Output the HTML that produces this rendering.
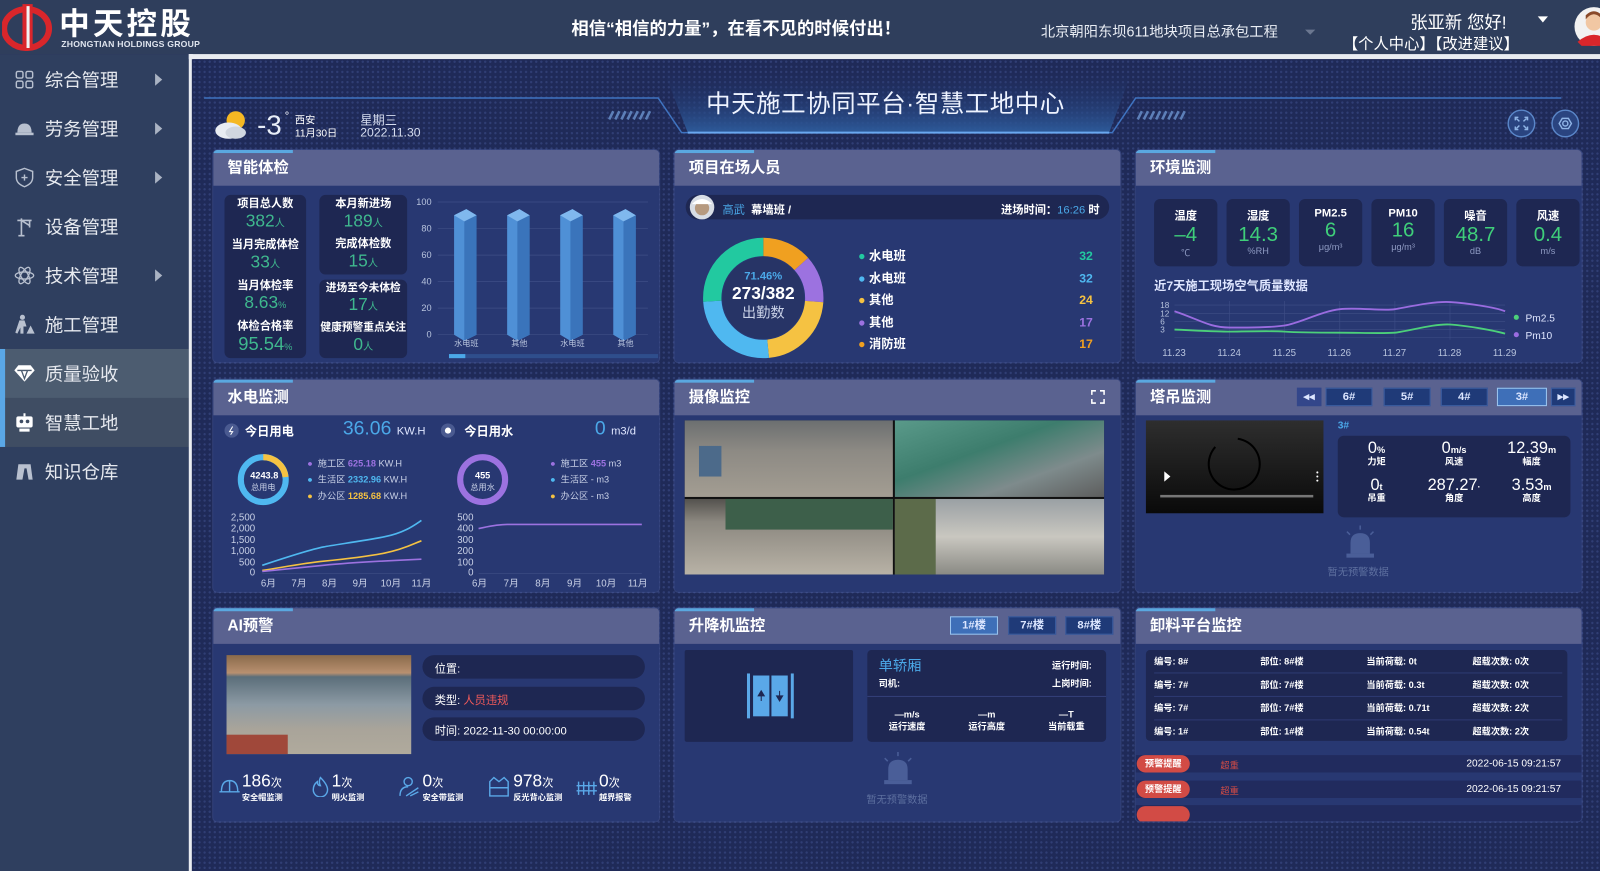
<!DOCTYPE html>
<html><head><meta charset="utf-8">
<style>
*{margin:0;padding:0;box-sizing:border-box}
body{width:1600px;height:854px;overflow:hidden;background:#1f2a58;font-family:"Liberation Sans","Noto Sans CJK SC",sans-serif;color:#fff;position:relative}
#w{position:absolute;left:0;top:0;width:1568px;height:837px;transform:scale(1.020408);transform-origin:0 0}
.a{position:absolute}
.hdr{left:0;top:0;width:1600px;height:53px;background:#2f3e5c}
.side{left:0;top:53px;width:185px;height:801px;background:#2f3f5f}
.mi{position:absolute;left:0;width:185px;height:48px;font-size:18px;color:#e6e9ef;display:flex;align-items:center}
.mi .ic{width:20px;height:20px;margin-left:14px;margin-right:10px;display:flex;align-items:center;justify-content:center}
.mi .ar{position:absolute;left:152px;top:18px;width:0;height:0;border-left:7px solid #aab3c3;border-top:6px solid transparent;border-bottom:6px solid transparent}
.main{left:188px;top:58px;width:1412px;height:796px;background:#1f2a58;background-image:radial-gradient(rgba(80,100,170,.35) 1px,transparent 1.2px);background-size:5px 5px}
.strip{left:185px;top:53px;width:1415px;height:5px;background:#e9ecf1}
.strip2{left:185px;top:53px;width:4px;height:801px;background:#e9ecf1}
.pn{position:absolute;background:#283872;border-radius:4px;overflow:hidden;box-shadow:0 0 0 1px rgba(90,110,180,.35)}
.pt{height:35px;background:#5a6290;font-size:15px;font-weight:bold;padding-left:14px;line-height:35px;position:relative}
.pt:before{content:"";position:absolute;left:0;top:0;width:78px;height:3px;background:#5aa8e0}
.card{position:absolute;background:#1e2752;border-radius:6px}
.c{text-align:center}
.g{color:#3fb88e}
.nw{white-space:nowrap}
.btn{position:absolute;top:8px;height:18px;background:#1f3a78;border:1px solid #3c5da0;font-size:11px;font-weight:bold;text-align:center;line-height:16px;color:#dce6ff}
</style></head><body><div id="w">
<div class="a hdr"></div>
<svg class="a" style="left:2px;top:2px" width="52" height="48" viewBox="0 0 52 48"><ellipse cx="24" cy="26" rx="22" ry="19" fill="none" stroke="#d9262b" stroke-width="6"/><path d="M20 2 L30 2 L30 46 L20 46Z" fill="#d9262b"/><path d="M24 4 L27 4 L27 45 L24 45Z" fill="#f3f3f3"/></svg>
<div class="a" style="left:58px;top:4px;font-size:30px;font-weight:bold;letter-spacing:3px;color:#fff;font-family:'Noto Sans CJK SC',sans-serif;line-height:34px">中天控股</div>
<div class="a" style="left:60px;top:38px;font-size:8.5px;font-weight:bold;color:#dfe4ee;letter-spacing:.2px">ZHONGTIAN HOLDINGS GROUP</div>
<div class="a" style="left:560px;top:14px;font-size:17px;font-weight:bold">相信“相信的力量”，在看不见的时候付出！</div>
<div class="a" style="left:1020px;top:21px;font-size:14px;color:#e9edf4">北京朝阳东坝611地块项目总承包工程</div>
<div class="a" style="left:1279px;top:29px;border-top:5px solid #6b7790;border-left:5px solid transparent;border-right:5px solid transparent"></div>
<div class="a" style="left:1382px;top:8px;font-size:17px">张亚新 您好!</div>
<div class="a" style="left:1507px;top:16px;border-top:6px solid #fff;border-left:5px solid transparent;border-right:5px solid transparent"></div>
<div class="a" style="left:1316px;top:32px;font-size:15px">【个人中心】【改进建议】</div>
<svg class="a" style="left:1540px;top:5px" width="40" height="42"><circle cx="22" cy="21" r="19" fill="#f2f2f2"/><circle cx="22" cy="17" r="8" fill="#f1c7a3"/><path d="M14 14 Q22 4 30 14 L30 10 Q22 2 14 10Z" fill="#8a4a2a"/><path d="M6 36 Q22 22 38 36 L34 40 L10 40Z" fill="#d9262b"/></svg>

<div class="a side"></div>
<div class="a" style="left:0;top:342px;width:185px;height:48px;background:#4c5c70"></div>
<div class="a" style="left:0;top:390px;width:185px;height:48px;background:#3f4d63"></div>
<div class="a" style="left:0;top:342px;width:5px;height:96px;background:#5aa7e6"></div>
<div class="mi" style="top:54px"><span class="ic"><svg width="18" height="18" fill="none" stroke="#b8c0cf" stroke-width="1.4"><rect x="1" y="1" width="6.5" height="6.5" rx="1.5"/><rect x="10.5" y="1" width="6.5" height="6.5" rx="1.5"/><rect x="1" y="10.5" width="6.5" height="6.5" rx="1.5"/><rect x="10.5" y="10.5" width="6.5" height="6.5" rx="1.5"/></svg></span>综合管理<i class="ar"></i></div>
<div class="mi" style="top:102px"><span class="ic"><svg width="18" height="14"><path d="M2 11 Q2 2 9 2 Q16 2 16 11Z" fill="#b8c0cf"/><rect x="0" y="11" width="18" height="2.5" fill="#b8c0cf"/></svg></span>劳务管理<i class="ar"></i></div>
<div class="mi" style="top:150px"><span class="ic"><svg width="18" height="20" fill="none" stroke="#b8c0cf" stroke-width="1.4"><path d="M9 1 L17 4 L17 10 Q17 16 9 19 Q1 16 1 10 L1 4Z"/><path d="M9 7 V13 M6 10 H12"/></svg></span>安全管理<i class="ar"></i></div>
<div class="mi" style="top:198px"><span class="ic"><svg width="18" height="20" fill="none" stroke="#b8c0cf" stroke-width="1.6"><path d="M2 4 H16 M6 2 V19 M3 19 H9 M6 4 L14 9 M14 4 V11"/></svg></span>设备管理</div>
<div class="mi" style="top:246px"><span class="ic"><svg width="20" height="20" fill="none" stroke="#b8c0cf" stroke-width="1.3"><ellipse cx="10" cy="10" rx="9" ry="3.5"/><ellipse cx="10" cy="10" rx="9" ry="3.5" transform="rotate(60 10 10)"/><ellipse cx="10" cy="10" rx="9" ry="3.5" transform="rotate(-60 10 10)"/></svg></span>技术管理<i class="ar"></i></div>
<div class="mi" style="top:294px"><span class="ic"><svg width="20" height="20" fill="#b8c0cf"><circle cx="8" cy="3" r="2.5"/><path d="M5 6 L10 6 L12 12 L9 12 L9 19 L6 19 L6 13 L3 19 L1 18 Z"/><path d="M12 19 L16 11 L20 19Z"/></svg></span>施工管理</div>
<div class="mi" style="top:342px"><span class="ic"><svg width="20" height="18"><path d="M4 1 H16 L20 6 L10 17 L0 6Z" fill="#fff"/><path d="M3 6 H17 M7 6 L10 14 L13 6" stroke="#4c5c70" stroke-width="1.3" fill="none"/></svg></span>质量验收</div>
<div class="mi" style="top:390px"><span class="ic"><svg width="20" height="20"><rect x="2" y="4" width="16" height="11" rx="2" fill="#fff"/><circle cx="7" cy="9" r="1.8" fill="#3f4d63"/><circle cx="13" cy="9" r="1.8" fill="#3f4d63"/><rect x="5" y="16" width="10" height="3" fill="#fff"/><rect x="9" y="1" width="2" height="3" fill="#fff"/></svg></span>智慧工地</div>
<div class="mi" style="top:438px"><span class="ic"><svg width="18" height="18" fill="#b8c0cf"><path d="M3 2 H15 L17 17 H13 L11 6 H9 L7 17 H1Z"/></svg></span>知识仓库</div>

<div class="a strip"></div><div class="a strip2"></div>
<div class="a main"></div>

<svg class="a" style="left:190px;top:62px" width="1410" height="80">
<defs><linearGradient id="tb" x1="0" y1="0" x2="0" y2="1"><stop offset="0" stop-color="#1f2d62" stop-opacity="0"/><stop offset="1" stop-color="#2d5a9a"/></linearGradient></defs>
<path d="M10 34 L455 34 L478 68 L900 68 L923 34 L1340 34" stroke="#3f73c0" stroke-width="1.5" fill="none"/>
<path d="M460 6 L920 6 L897 68 L484 68Z" fill="url(#tb)"/>
<path d="M484 68 L897 68" stroke="#6aa8f0" stroke-width="2"/>
<g stroke="#5d7fb8" stroke-width="2.5">
<path d="M925 55 l4 -8 M931 55 l4 -8 M937 55 l4 -8 M943 55 l4 -8 M949 55 l4 -8 M955 55 l4 -8 M961 55 l4 -8 M967 55 l4 -8"/>
<path d="M425 55 l4 -8 M431 55 l4 -8 M437 55 l4 -8 M443 55 l4 -8 M419 55 l4 -8 M413 55 l4 -8 M407 55 l4 -8"/>
</g>
</svg>
<div class="a" style="left:692px;top:82px;font-size:24px;color:#eef3ff;letter-spacing:.5px">中天施工协同平台·智慧工地中心</div>
<svg class="a" style="left:209px;top:106px" width="36" height="32"><circle cx="22" cy="12" r="9" fill="#f5b823"/><ellipse cx="15" cy="22" rx="13" ry="8" fill="#e8ecf2"/><ellipse cx="22" cy="24" rx="10" ry="6" fill="#d0d6df"/></svg>
<div class="a" style="left:252px;top:108px;font-size:27px;color:#e8eef8">-3</div>
<div class="a" style="left:279px;top:108px;font-size:11px">°</div>
<div class="a" style="left:289px;top:109px;font-size:10px">西安</div>
<div class="a" style="left:289px;top:122px;font-size:10px">11月30日</div>
<div class="a" style="left:353px;top:109px;font-size:12px;color:#d7def0">星期三</div>
<div class="a" style="left:353px;top:123px;font-size:12px;color:#d7def0">2022.11.30</div>
<svg class="a" style="left:1476px;top:106px" width="82" height="30" fill="none" stroke="#8fb4e6" stroke-width="1.4">
<circle cx="15" cy="15" r="13" fill="#2a4480" stroke="#5a86c8"/><path d="M9 12 V9 H12 M18 9 H21 V12 M21 18 V21 H18 M12 21 H9 V18 M10 10 L13 13 M20 10 L17 13 M20 20 L17 17 M10 20 L13 17"/>
<circle cx="58" cy="15" r="13" fill="#2a4480" stroke="#5a86c8"/><path d="M52 15 L55 10 H61 L64 15 L61 20 H55Z"/><circle cx="58" cy="15" r="2.5"/>
</svg>

<!-- ROW 1 -->
<div class="pn" style="left:209px;top:147px;width:437px;height:208px"><div class="pt">智能体检</div>
<div class="card" style="left:11px;top:44px;width:80px;height:160px"></div>
<div class="card" style="left:104px;top:44px;width:86px;height:78px"></div>
<div class="card" style="left:104px;top:127px;width:86px;height:77px"></div>
<div class="a c nw" style="left:11px;top:47px;width:80px;font-size:11px;font-weight:bold;line-height:13px">项目总人数<br><span class="g" style="font-size:17px;font-weight:normal;line-height:19px">382<small style="font-size:10px">人</small></span></div>
<div class="a c nw" style="left:11px;top:87px;width:80px;font-size:11px;font-weight:bold;line-height:13px">当月完成体检<br><span class="g" style="font-size:17px;font-weight:normal;line-height:19px">33<small style="font-size:10px">人</small></span></div>
<div class="a c nw" style="left:11px;top:127px;width:80px;font-size:11px;font-weight:bold;line-height:13px">当月体检率<br><span class="g" style="font-size:17px;font-weight:normal;line-height:19px">8.63<small style="font-size:9px">%</small></span></div>
<div class="a c nw" style="left:11px;top:167px;width:80px;font-size:11px;font-weight:bold;line-height:13px">体检合格率<br><span class="g" style="font-size:18px;font-weight:normal;line-height:20px">95.54<small style="font-size:9px">%</small></span></div>
<div class="a c nw" style="left:104px;top:47px;width:86px;font-size:11px;font-weight:bold;line-height:13px">本月新进场<br><span class="g" style="font-size:17px;font-weight:normal;line-height:19px">189<small style="font-size:10px">人</small></span></div>
<div class="a c nw" style="left:104px;top:86px;width:86px;font-size:11px;font-weight:bold;line-height:13px">完成体检数<br><span class="g" style="font-size:17px;font-weight:normal;line-height:19px">15<small style="font-size:10px">人</small></span></div>
<div class="a c nw" style="left:104px;top:129px;width:86px;font-size:10.5px;font-weight:bold;line-height:13px">进场至今未体检<br><span class="g" style="font-size:17px;font-weight:normal;line-height:19px">17<small style="font-size:10px">人</small></span></div>
<div class="a c nw" style="left:102px;top:168px;width:90px;font-size:10.5px;font-weight:bold;line-height:13px">健康预警重点关注<br><span class="g" style="font-size:17px;font-weight:normal;line-height:19px">0<small style="font-size:10px">人</small></span></div>
<svg class="a" style="left:196px;top:44px" width="240" height="164">
<g fill="#b7c3dd" font-size="9" text-anchor="end"><text x="18" y="10">100</text><text x="18" y="36">80</text><text x="18" y="62">60</text><text x="18" y="88">40</text><text x="18" y="114">20</text><text x="18" y="140">0</text></g>
<g stroke="#3e4e86" stroke-width=".7"><path d="M24 7 H230 M24 33 H230 M24 59 H230 M24 85 H230 M24 111 H230 M24 137 H230"/></g>
<g>
<path d="M40 20 L52 14 L62 20 L62 137 L50 143 L40 137Z" fill="#4f90d6"/><path d="M50 26 L62 20 L62 137 L50 143Z" fill="#3a74bb"/><path d="M40 20 L52 14 L62 20 L50 26Z" fill="#80b8ee"/>
<path d="M92 20 L104 14 L114 20 L114 137 L102 143 L92 137Z" fill="#4f90d6"/><path d="M102 26 L114 20 L114 137 L102 143Z" fill="#3a74bb"/><path d="M92 20 L104 14 L114 20 L102 26Z" fill="#80b8ee"/>
<path d="M144 20 L156 14 L166 20 L166 137 L154 143 L144 137Z" fill="#4f90d6"/><path d="M154 26 L166 20 L166 137 L154 143Z" fill="#3a74bb"/><path d="M144 20 L156 14 L166 20 L154 26Z" fill="#80b8ee"/>
<path d="M196 20 L208 14 L218 20 L218 137 L206 143 L196 137Z" fill="#4f90d6"/><path d="M206 26 L218 20 L218 137 L206 143Z" fill="#3a74bb"/><path d="M196 20 L208 14 L218 20 L206 26Z" fill="#80b8ee"/>
</g>
<g fill="#b7c3dd" font-size="8" text-anchor="middle"><text x="52" y="148">水电班</text><text x="104" y="148">其他</text><text x="156" y="148">水电班</text><text x="208" y="148">其他</text></g>
<rect x="35" y="156" width="205" height="4" fill="#2f4e8c"/><rect x="35" y="156" width="16" height="4" fill="#4ba8e8"/>
</svg>
</div>

<div class="pn" style="left:661px;top:147px;width:437px;height:208px"><div class="pt">项目在场人员</div>
<div class="card" style="left:11px;top:44px;width:415px;height:24px;border-radius:12px"></div>
<svg class="a" style="left:14px;top:43px" width="26" height="26"><circle cx="13" cy="13" r="12" fill="#d8dde5"/><circle cx="13" cy="14" r="7" fill="#b69a80"/><path d="M3 10 Q13 0 23 10Z" fill="#fff"/></svg>
<div class="a" style="left:47px;top:50px;font-size:11px"><span style="color:#4aa8e8">高武</span>&nbsp;&nbsp;<b>幕墙班 /</b></div>
<div class="a" style="left:320px;top:50px;font-size:11px"><b>进场时间：</b><span style="color:#4aa8e8">16:26</span> <b>时</b></div>
<svg class="a" style="left:26px;top:84px" width="122" height="122" viewBox="0 0 122 122">
<g fill="none" stroke-width="18" transform="rotate(-90 61 61)">
<circle cx="61" cy="61" r="50" stroke="#f0a020" stroke-dasharray="42 400" stroke-dashoffset="0"/>
<circle cx="61" cy="61" r="50" stroke="#9c72e0" stroke-dasharray="40 400" stroke-dashoffset="-42"/>
<circle cx="61" cy="61" r="50" stroke="#f5c242" stroke-dasharray="70 400" stroke-dashoffset="-82"/>
<circle cx="61" cy="61" r="50" stroke="#4fb8f0" stroke-dasharray="80 400" stroke-dashoffset="-152"/>
<circle cx="61" cy="61" r="50" stroke="#22c9a0" stroke-dasharray="82 400" stroke-dashoffset="-232"/>
</g>
<circle cx="61" cy="61" r="40" fill="#273466"/>
<text x="61" y="43" fill="#4ba8e8" font-size="11" text-anchor="middle" font-weight="bold">71.46%</text>
<text x="61" y="62" fill="#fff" font-size="17" text-anchor="middle" font-weight="bold">273/382</text>
<text x="61" y="80" fill="#c8d0e6" font-size="14" text-anchor="middle">出勤数</text>
</svg>
<div class="a" style="left:180px;top:94px;width:230px;font-size:12px;font-weight:bold;line-height:21.5px">
<div><span style="color:#22c9a0">●</span> 水电班<span style="float:right;color:#22c9a0">32</span></div>
<div><span style="color:#4fb8f0">●</span> 水电班<span style="float:right;color:#4fb8f0">32</span></div>
<div><span style="color:#f5c242">●</span> 其他<span style="float:right;color:#f5c242">24</span></div>
<div><span style="color:#9c72e0">●</span> 其他<span style="float:right;color:#9c72e0">17</span></div>
<div><span style="color:#f0a020">●</span> 消防班<span style="float:right;color:#f0a020">17</span></div>
</div>
</div>

<div class="pn" style="left:1113px;top:147px;width:437px;height:208px"><div class="pt">环境监测</div>
<div class="a" style="left:18px;top:48px;width:415px;font-size:11px;font-weight:bold">
<div class="card c" style="left:0;top:0;width:62px;height:66px;padding-top:8px">温度<div style="font-size:20px;font-weight:normal;color:#3fcf7a;line-height:22px">–4</div><div style="font-size:9px;color:#8e9ac2;font-weight:normal">℃</div></div>
<div class="card c" style="left:71px;top:0;width:62px;height:66px;padding-top:8px">湿度<div style="font-size:20px;font-weight:normal;color:#3fcf7a;line-height:22px">14.3</div><div style="font-size:9px;color:#8e9ac2;font-weight:normal">%RH</div></div>
<div class="card c" style="left:142px;top:0;width:62px;height:66px;padding-top:8px">PM2.5<div style="font-size:20px;font-weight:normal;color:#3fcf7a;line-height:22px">6</div><div style="font-size:9px;color:#8e9ac2;font-weight:normal">μg/m³</div></div>
<div class="card c" style="left:213px;top:0;width:62px;height:66px;padding-top:8px">PM10<div style="font-size:20px;font-weight:normal;color:#3fcf7a;line-height:22px">16</div><div style="font-size:9px;color:#8e9ac2;font-weight:normal">μg/m³</div></div>
<div class="card c" style="left:284px;top:0;width:62px;height:66px;padding-top:8px">噪音<div style="font-size:20px;font-weight:normal;color:#3fcf7a;line-height:22px">48.7</div><div style="font-size:9px;color:#8e9ac2;font-weight:normal">dB</div></div>
<div class="card c" style="left:355px;top:0;width:62px;height:66px;padding-top:8px">风速<div style="font-size:20px;font-weight:normal;color:#3fcf7a;line-height:22px">0.4</div><div style="font-size:9px;color:#8e9ac2;font-weight:normal">m/s</div></div>
</div>
<div class="a" style="left:18px;top:124px;font-size:12px;font-weight:bold;color:#dfe6ff">近7天施工现场空气质量数据</div>
<svg class="a" style="left:22px;top:146px" width="410" height="62">
<g stroke="#3e4e86" stroke-width=".6"><path d="M16 6 H340 M16 14 H340 M16 22 H340 M16 30 H340 M16 38 H340 M70 2 V40 M124 2 V40 M178 2 V40 M232 2 V40 M286 2 V40"/></g>
<g fill="#b7c3dd" font-size="8"><text x="2" y="9">18</text><text x="2" y="17">12</text><text x="2" y="25">6</text><text x="2" y="33">3</text></g>
<path d="M16 12 C40 20 50 28 70 28 S110 28 124 26 S160 12 178 10 S220 12 232 10 S270 2 286 3 S330 8 340 12" stroke="#9a6ce0" stroke-width="1.8" fill="none"/>
<path d="M16 30 C40 31 60 32 70 32 S110 31 124 32 S160 33 178 33 S220 34 232 33 S270 24 286 25 S330 31 340 34" stroke="#4cd07a" stroke-width="1.8" fill="none"/>
<g fill="#b7c3dd" font-size="9.5"><text x="4" y="56">11.23</text><text x="58" y="56">11.24</text><text x="112" y="56">11.25</text><text x="166" y="56">11.26</text><text x="220" y="56">11.27</text><text x="274" y="56">11.28</text><text x="328" y="56">11.29</text></g>
<circle cx="351" cy="18" r="2.5" fill="#4cd07a"/><text x="360" y="22" fill="#dfe6ff" font-size="10">Pm2.5</text>
<circle cx="351" cy="35" r="2.5" fill="#9a6ce0"/><text x="360" y="39" fill="#dfe6ff" font-size="10">Pm10</text>
</svg>
</div>

<!-- ROW 2 -->
<div class="pn" style="left:209px;top:372px;width:437px;height:208px"><div class="pt">水电监测</div>
<svg class="a" style="left:11px;top:43px" width="14" height="14"><circle cx="7" cy="7" r="7" fill="#4a5a90"/><path d="M8 3 L5 8 H8 L6 11" stroke="#fff" fill="none"/></svg>
<div class="a" style="left:31px;top:42px;font-size:12px;font-weight:bold">今日用电</div>
<div class="a" style="left:127px;top:38px;font-size:19px;color:#4ba8e8">36.06 <span style="font-size:11px;color:#dfe6ff">KW.H</span></div>
<svg class="a" style="left:223px;top:43px" width="14" height="14"><circle cx="7" cy="7" r="7" fill="#4a5a90"/><circle cx="7" cy="7" r="3" fill="#fff"/></svg>
<div class="a" style="left:246px;top:42px;font-size:12px;font-weight:bold">今日用水</div>
<div class="a" style="left:374px;top:38px;font-size:19px;color:#4ba8e8">0 <span style="font-size:11px;color:#dfe6ff">m3/d</span></div>
<svg class="a" style="left:23px;top:72px" width="52" height="52"><g fill="none" stroke-width="6" transform="rotate(-90 26 26)"><circle cx="26" cy="26" r="22" stroke="#4fb8f0"/><circle cx="26" cy="26" r="22" stroke="#f5c242" stroke-dasharray="32 200"/><circle cx="26" cy="26" r="22" stroke="#9c72e0" stroke-dasharray="18 200" stroke-dashoffset="18"/></g><text x="27" y="25" fill="#fff" font-size="9" font-weight="bold" text-anchor="middle">4243.8</text><text x="26" y="36" fill="#c8d0e6" font-size="8" text-anchor="middle">总用电</text></svg>
<div class="a" style="left:92px;top:74px;font-size:9px;line-height:16px;color:#c8d0e6">
<div><span style="color:#9c72e0">●</span>&nbsp; 施工区 <b style="color:#9c72e0">625.18</b> KW.H</div>
<div><span style="color:#4fb8f0">●</span>&nbsp; 生活区 <b style="color:#4fb8f0">2332.96</b> KW.H</div>
<div><span style="color:#f5c242">●</span>&nbsp; 办公区 <b style="color:#f5c242">1285.68</b> KW.H</div></div>
<svg class="a" style="left:238px;top:72px" width="52" height="52"><circle cx="26" cy="26" r="22" stroke="#9c72e0" stroke-width="6" fill="none"/><text x="26" y="25" fill="#fff" font-size="9" font-weight="bold" text-anchor="middle">455</text><text x="26" y="36" fill="#c8d0e6" font-size="8" text-anchor="middle">总用水</text></svg>
<div class="a" style="left:330px;top:74px;font-size:9px;line-height:16px;color:#c8d0e6">
<div><span style="color:#9c72e0">●</span>&nbsp; 施工区 <b style="color:#9c72e0">455</b> m3</div>
<div><span style="color:#4fb8f0">●</span>&nbsp; 生活区 - m3</div>
<div><span style="color:#f5c242">●</span>&nbsp; 办公区 - m3</div></div>
<svg class="a" style="left:8px;top:128px" width="430" height="80">
<g fill="#c8d0e6" font-size="9.5" text-anchor="end"><text x="33" y="10">2,500</text><text x="33" y="21">2,000</text><text x="33" y="32">1,500</text><text x="33" y="43">1,000</text><text x="33" y="54">500</text><text x="33" y="64">0</text>
<text x="247" y="10">500</text><text x="247" y="21">400</text><text x="247" y="32">300</text><text x="247" y="43">200</text><text x="247" y="54">100</text><text x="247" y="64">0</text></g>
<g stroke="#3e4e86" stroke-width=".6"><path d="M40 62 H196 M252 62 H412"/></g>
<path d="M40 54 C70 44 90 38 100 36 S140 30 160 26 S190 14 196 10" stroke="#4fb8f0" stroke-width="1.6" fill="none"/>
<path d="M40 59 C60 56 80 52 100 50 S140 46 160 42 S190 32 196 30" stroke="#f5c242" stroke-width="1.6" fill="none"/>
<path d="M40 60 C60 58 80 56 100 54 S150 50 196 48" stroke="#9c72e0" stroke-width="1.6" fill="none"/>
<path d="M252 18 C262 16 270 14 280 14 H412" stroke="#9c72e0" stroke-width="1.6" fill="none"/>
<g fill="#c8d0e6" font-size="9.5" text-anchor="middle"><text x="46" y="75">6月</text><text x="76" y="75">7月</text><text x="106" y="75">8月</text><text x="136" y="75">9月</text><text x="166" y="75">10月</text><text x="196" y="75">11月</text>
<text x="253" y="75">6月</text><text x="284" y="75">7月</text><text x="315" y="75">8月</text><text x="346" y="75">9月</text><text x="377" y="75">10月</text><text x="408" y="75">11月</text></g>
</svg>
</div>

<div class="pn" style="left:661px;top:372px;width:437px;height:208px"><div class="pt">摄像监控</div>
<svg class="a" style="left:408px;top:10px" width="14" height="14" fill="none" stroke="#fff" stroke-width="1.5"><path d="M1 5 V1 H5 M9 1 H13 V5 M13 9 V13 H9 M5 13 H1 V9"/></svg>
<div class="a" style="left:10px;top:40px;width:411px;height:151px;background:#111"></div>
<div class="a" style="left:10px;top:40px;width:204px;height:75px;background:linear-gradient(180deg,#6c6f70 0%,#8d8a84 40%,#a39d92 100%)"><div style="position:absolute;left:14px;top:25px;width:22px;height:30px;background:#4c6a8a"></div></div>
<div class="a" style="left:216px;top:40px;width:205px;height:75px;background:linear-gradient(160deg,#5a9a8a 0%,#3d7d6d 40%,#7e8b8c 70%,#5d5d5d 100%)"></div>
<div class="a" style="left:10px;top:117px;width:204px;height:74px;background:linear-gradient(180deg,#54524e 0%,#8c8880 30%,#b8b2a6 100%)"><div style="position:absolute;left:40px;top:0;width:164px;height:30px;background:#3d5f4a"></div></div>
<div class="a" style="left:216px;top:117px;width:205px;height:74px;background:linear-gradient(180deg,#9aa0a4 0%,#c9c7c0 50%,#8a8a84 100%)"><div style="position:absolute;left:0;top:0;width:40px;height:74px;background:#5c6b4a"></div></div>
</div>

<div class="pn" style="left:1113px;top:372px;width:437px;height:208px"><div class="pt">塔吊监测</div>
<div class="btn" style="left:158px;width:24px;background:#33468a;border-color:#33468a">◂◂</div>
<div class="btn" style="left:186px;width:46px">6#</div>
<div class="btn" style="left:243px;width:46px">5#</div>
<div class="btn" style="left:299px;width:46px">4#</div>
<div class="btn" style="left:354px;width:49px;background:#3e6fb8;border-color:#9cc5ef">3#</div>
<div class="btn" style="left:407px;width:24px;background:#1f3a78">▸▸</div>
<div class="a" style="left:10px;top:40px;width:174px;height:91px;background:linear-gradient(180deg,#2e2e2e,#0a0a0a)"></div>
<svg class="a" style="left:10px;top:40px" width="174" height="91"><path d="M90 18 A25 25 0 1 1 68 26" stroke="#000" stroke-width="2" fill="none"/><path d="M18 50 L24 55 L18 60Z" fill="#fff"/><rect x="14" y="73" width="150" height="2.5" fill="#777"/><circle cx="168" cy="51" r="1" fill="#fff"/><circle cx="168" cy="55" r="1" fill="#fff"/><circle cx="168" cy="59" r="1" fill="#fff"/></svg>
<div class="a" style="left:198px;top:40px;font-size:10px;color:#4ba8e8;font-weight:bold">3#</div>
<div class="card" style="left:198px;top:55px;width:228px;height:80px"></div>
<div class="a c" style="left:198px;top:62px;width:228px;font-size:9px;font-weight:bold;line-height:11px">
<div class="a" style="left:0;width:76px"><span style="font-size:16px;font-weight:normal">0</span>%<br>力矩</div>
<div class="a" style="left:76px;width:76px"><span style="font-size:16px;font-weight:normal">0</span>m/s<br>风速</div>
<div class="a" style="left:152px;width:76px"><span style="font-size:16px;font-weight:normal">12.39</span>m<br>幅度</div>
<div class="a" style="left:0;top:36px;width:76px"><span style="font-size:16px;font-weight:normal">0</span>t<br>吊重</div>
<div class="a" style="left:76px;top:36px;width:76px"><span style="font-size:16px;font-weight:normal">287.27</span>·<br>角度</div>
<div class="a" style="left:152px;top:36px;width:76px"><span style="font-size:16px;font-weight:normal">3.53</span>m<br>高度</div>
</div>
<svg class="a" style="left:203px;top:142px" width="34" height="34" fill="#4a5e98" stroke="#4a5e98"><path d="M8 28 V18 Q8 9 17 9 Q26 9 26 18 V28Z"/><rect x="4" y="29" width="26" height="3"/><path d="M17 1 V5 M4 7 L7 10 M30 7 L27 10" stroke-width="1.5"/></svg>
<div class="a" style="left:188px;top:180px;font-size:10px;color:#5d6f9f">暂无预警数据</div>
</div>

<!-- ROW 3 -->
<div class="pn" style="left:209px;top:596px;width:437px;height:209px"><div class="pt">AI预警</div>
<div class="a" style="left:13px;top:46px;width:181px;height:97px;background:linear-gradient(180deg,#8a6a4a 0%,#b89070 18%,#5b6e7a 22%,#8c9aa4 50%,#a9a49a 75%,#b0aa9c 100%)"><div style="position:absolute;left:0;top:78px;width:60px;height:19px;background:#a0483a"></div></div>
<div class="card" style="left:205px;top:46px;width:218px;height:23px;border-radius:12px"></div>
<div class="card" style="left:205px;top:77px;width:218px;height:23px;border-radius:12px"></div>
<div class="card" style="left:205px;top:107px;width:218px;height:23px;border-radius:12px"></div>
<div class="a" style="left:217px;top:51px;font-size:11px">位置:</div>
<div class="a" style="left:217px;top:82px;font-size:11px">类型: <span style="color:#f05a5a">人员违规</span></div>
<div class="a" style="left:217px;top:112px;font-size:11px">时间: 2022-11-30 00:00:00</div>
<div class="a" style="left:6px;top:160px;width:430px;height:40px">
<svg class="a" style="left:0;top:6px" width="20" height="20" fill="none" stroke="#5aa8e8" stroke-width="1.4"><path d="M2 14 Q2 3 10 3 Q18 3 18 14Z M0 14 H20 M10 3 V14"/></svg>
<div class="a" style="left:22px;top:0;font-size:17px">186<span style="font-size:11px">次</span></div><div class="a nw" style="left:22px;top:20px;font-size:8px;font-weight:bold">安全帽监测</div>
<svg class="a" style="left:90px;top:5px" width="18" height="20" fill="none" stroke="#5aa8e8" stroke-width="1.4"><path d="M9 1 Q16 8 16 13 A7 7 0 0 1 2 13 Q2 8 6 5 Q6 9 9 9 Q7 5 9 1Z"/></svg>
<div class="a" style="left:110px;top:0;font-size:17px">1<span style="font-size:11px">次</span></div><div class="a nw" style="left:110px;top:20px;font-size:8px;font-weight:bold">明火监测</div>
<svg class="a" style="left:175px;top:5px" width="22" height="20" fill="none" stroke="#5aa8e8" stroke-width="1.4"><circle cx="10" cy="5" r="4"/><path d="M2 19 Q2 10 10 10 M8 19 L20 11 M12 19 L20 15"/></svg>
<div class="a" style="left:199px;top:0;font-size:17px">0<span style="font-size:11px">次</span></div><div class="a nw" style="left:199px;top:20px;font-size:8px;font-weight:bold">安全带监测</div>
<svg class="a" style="left:264px;top:5px" width="20" height="20" fill="none" stroke="#5aa8e8" stroke-width="1.4"><path d="M5 1 L10 5 L15 1 L19 5 V19 H1 V5Z M1 11 H19"/></svg>
<div class="a" style="left:288px;top:0;font-size:17px">978<span style="font-size:11px">次</span></div><div class="a nw" style="left:288px;top:20px;font-size:8px;font-weight:bold">反光背心监测</div>
<svg class="a" style="left:350px;top:6px" width="20" height="18" fill="none" stroke="#5aa8e8" stroke-width="1.4"><path d="M2 4 V17 M7 4 V17 M12 4 V17 M17 4 V17 M0 8 H20 M0 13 H20"/></svg>
<div class="a" style="left:372px;top:0;font-size:17px">0<span style="font-size:11px">次</span></div><div class="a nw" style="left:372px;top:20px;font-size:8px;font-weight:bold">越界报警</div>
</div>
</div>

<div class="pn" style="left:661px;top:596px;width:437px;height:209px"><div class="pt">升降机监控</div>
<div class="btn" style="left:270px;width:47px;background:#3e6fb8;border-color:#9cc5ef">1#楼</div>
<div class="btn" style="left:327px;width:47px">7#楼</div>
<div class="btn" style="left:383px;width:47px">8#楼</div>
<div class="card" style="left:10px;top:41px;width:165px;height:90px;border-radius:2px"></div>
<svg class="a" style="left:71px;top:63px" width="46" height="46"><rect x="0" y="1" width="3" height="44" fill="#5aa8e8"/><rect x="43" y="1" width="3" height="44" fill="#5aa8e8"/><rect x="6" y="3" width="16" height="40" fill="#5aa8e8"/><rect x="24" y="3" width="16" height="40" fill="#5aa8e8"/><path d="M14 18 L11 23 H17Z M14 23 V28 M32 28 L29 23 H35Z M32 18 V23" fill="#1e2752" stroke="#1e2752"/></svg>
<div class="card" style="left:189px;top:41px;width:234px;height:90px;border-radius:4px"></div>
<div class="a" style="left:189px;top:86px;width:234px;height:1px;background:#34407a"></div>
<div class="a" style="left:200px;top:46px;font-size:14px;color:#4ba8e8">单轿厢</div>
<div class="a" style="left:200px;top:67px;font-size:9px;font-weight:bold">司机:</div>
<div class="a" style="left:370px;top:49px;font-size:9px;font-weight:bold">运行时间:</div>
<div class="a" style="left:370px;top:67px;font-size:9px;font-weight:bold">上岗时间:</div>
<div class="a c" style="left:189px;top:98px;width:234px;font-size:9px;font-weight:bold;line-height:12px">
<div class="a" style="left:0;width:78px">—m/s<br>运行速度</div><div class="a" style="left:78px;width:78px">—m<br>运行高度</div><div class="a" style="left:156px;width:78px">—T<br>当前载重</div></div>
<svg class="a" style="left:202px;top:140px" width="34" height="34" fill="#4a5e98" stroke="#4a5e98"><path d="M8 28 V18 Q8 9 17 9 Q26 9 26 18 V28Z"/><rect x="4" y="29" width="26" height="3"/><path d="M17 1 V5 M4 7 L7 10 M30 7 L27 10" stroke-width="1.5"/></svg>
<div class="a" style="left:188px;top:179px;font-size:10px;color:#5d6f9f">暂无预警数据</div>
</div>

<div class="pn" style="left:1113px;top:596px;width:437px;height:209px"><div class="pt">卸料平台监控</div>
<div class="card" style="left:10px;top:41px;width:413px;height:89px;border-radius:4px"></div>
<div class="a" style="left:18px;top:41px;width:400px;font-size:9px;font-weight:bold;line-height:22px">
<div style="display:flex;border-bottom:1px solid #2e3a72"><span style="width:104px">编号: 8#</span><span style="width:104px">部位: 8#楼</span><span style="width:104px">当前荷载: 0t</span><span>超载次数: 0次</span></div>
<div style="display:flex;border-bottom:1px solid #2e3a72"><span style="width:104px">编号: 7#</span><span style="width:104px">部位: 7#楼</span><span style="width:104px">当前荷载: 0.3t</span><span>超载次数: 0次</span></div>
<div style="display:flex;border-bottom:1px solid #2e3a72"><span style="width:104px">编号: 7#</span><span style="width:104px">部位: 7#楼</span><span style="width:104px">当前荷载: 0.71t</span><span>超载次数: 2次</span></div>
<div style="display:flex"><span style="width:104px">编号: 1#</span><span style="width:104px">部位: 1#楼</span><span style="width:104px">当前荷载: 0.54t</span><span>超载次数: 2次</span></div>
</div>
<div class="a" style="left:0;top:144px;width:437px;height:17px;background:#212b5e"></div>
<div class="a" style="left:0;top:169px;width:437px;height:17px;background:#212b5e"></div>
<div class="a" style="left:0;top:193px;width:437px;height:17px;background:#212b5e"></div>
<div class="a c" style="left:1px;top:144px;width:52px;height:17px;border-radius:9px;background:#d24b45;font-size:9px;line-height:17px;font-weight:bold">预警提醒</div>
<div class="a c" style="left:1px;top:169px;width:52px;height:17px;border-radius:9px;background:#d24b45;font-size:9px;line-height:17px;font-weight:bold">预警提醒</div>
<div class="a" style="left:1px;top:194px;width:52px;height:17px;border-radius:9px;background:#d24b45"></div>
<div class="a" style="left:83px;top:147px;font-size:9px;color:#d24b45">超重</div>
<div class="a" style="left:83px;top:172px;font-size:9px;color:#d24b45">超重</div>
<div class="a" style="left:324px;top:147px;font-size:10px">2022-06-15 09:21:57</div>
<div class="a" style="left:324px;top:172px;font-size:10px">2022-06-15 09:21:57</div>
</div>
</div></body></html>
